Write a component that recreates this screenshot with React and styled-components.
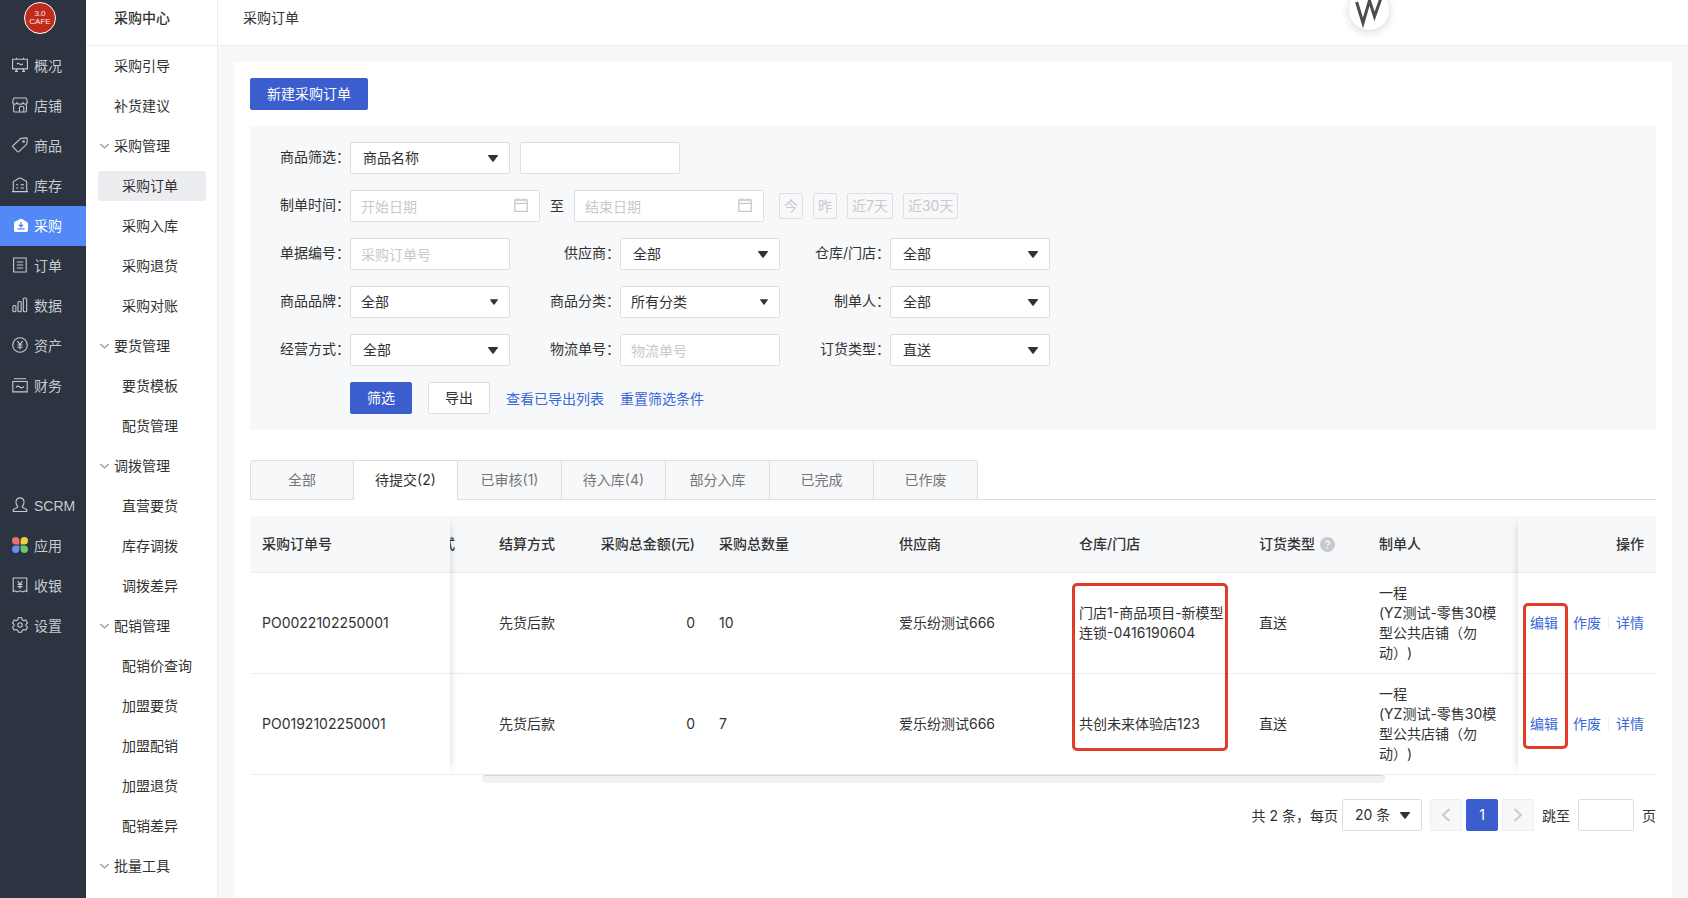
import React, { useState } from "react";
import styled, { createGlobalStyle } from "styled-components";

const GlobalStyle = createGlobalStyle`
  * {
    box-sizing: border-box;
  }
  body {
    margin: 0;
    background: #f7f8fa;
    color: #323233;
    font-family: Inter, "Noto Sans CJK SC", sans-serif;
    font-size: 14px;
    line-height: 20px;
    text-spacing-trim: space-all;
  }
  button, input, select {
    font: inherit;
    color: inherit;
    margin: 0;
  }
  a {
    text-decoration: none;
  }
`;

const Layout = styled.div`
  display: flex;
  min-height: 100vh;
`;

/* ---------- left rail ---------- */

const Rail = styled.nav`
  flex: none;
  width: 86px;
  padding-top: 2px;
  background: #2b3440;
  font-family: "Liberation Sans", "Noto Sans CJK SC", sans-serif;
`;

const ShopLogo = styled.div`
  display: flex;
  flex-direction: column;
  align-items: center;
  justify-content: center;
  width: 32px;
  height: 32px;
  margin: 0 auto 12px 24px;
  border: 1px solid #fff;
  border-radius: 50%;
  background: #c02b1d;
  color: #fbeae8;
  font-size: 8px;
  line-height: 8px;
`;

const RailList = styled.div`
  margin-bottom: 80px;
`;

const RailLink = styled.a`
  display: flex;
  align-items: center;
  gap: 6px;
  height: 40px;
  padding-left: 12px;
  background: ${(props) => (props.$active ? "#5389f6" : "transparent")};
  color: ${(props) => (props.$active ? "#fff" : "#c8cacd")};
  svg {
    flex: none;
    width: 16px;
    height: 16px;
    margin-bottom: 2px;
  }
`;

/* ---------- second menu ---------- */

const SubMenu = styled.nav`
  flex: none;
  width: 132px;
  border-right: 1px solid #ebedf0;
  background: #fff;
`;

const SubTitle = styled.h2`
  height: 46px;
  margin: 0;
  padding: 8px 0 0 28px;
  border-bottom: 1px solid #ebedf0;
  font-size: 14px;
  font-weight: 500;
  line-height: 20px;
`;

const SubLink = styled.a`
  display: flex;
  align-items: center;
  height: 30px;
  margin: 5px 11px 10px 12px;
  padding-left: ${(props) => (props.$child ? "24px" : "16px")};
  border-radius: 2px;
  background: ${(props) => (props.$active ? "#ebedf0" : "transparent")};
  color: #323233;
`;

const SubGroup = styled.button`
  display: flex;
  align-items: center;
  gap: 4px;
  height: 30px;
  margin: 5px 0 10px 12px;
  padding: 0 0 0 1px;
  border: 0;
  background: none;
  svg {
    width: 11px;
    height: 10px;
  }
`;

/* ---------- page ---------- */

const Main = styled.div`
  display: flex;
  flex: 1;
  flex-direction: column;
  min-width: 0;
`;

const Header = styled.header`
  position: relative;
  height: 46px;
  padding: 8px 0 0 25px;
  border-bottom: 1px solid #ebedf0;
  background: #fff;
`;

const Crumb = styled.h1`
  margin: 0;
  font-size: 14px;
  font-weight: 400;
  line-height: 20px;
`;

const FloatBadge = styled.div`
  position: absolute;
  top: -10px;
  right: 299px;
  width: 40px;
  height: 40px;
  border-radius: 50%;
  background: #fff;
  box-shadow: 0 2px 10px rgba(0, 0, 0, 0.16);
  svg {
    display: block;
  }
`;

const Panel = styled.main`
  flex: 1;
  margin: 16px 16px 0;
  padding: 16px;
  background: #fff;
`;

const Button = styled.button`
  height: 32px;
  padding: 0 16px;
  border: 1px solid ${(props) => (props.$primary ? "#3b5dcd" : "#dcdee0")};
  border-radius: 2px;
  background: ${(props) => (props.$primary ? "#3b5dcd" : "#fff")};
  color: ${(props) => (props.$primary ? "#fff" : "#323233")};
`;

const TextLink = styled.a`
  color: #3a68d8;
`;

/* ---------- filter ---------- */

const Filter = styled.form`
  display: flex;
  flex-direction: column;
  gap: 16px;
  margin: 16px 0 30px;
  padding: 16px 0;
  background: #f7f8fa;
`;

const FilterRow = styled.div`
  display: flex;
  align-items: center;
  gap: 10px;
`;

const Field = styled.div`
  display: flex;
  align-items: center;
`;

const Label = styled.label`
  width: 100px;
  padding-bottom: 2px;
  text-align: right;
`;

const Input = styled.input`
  width: ${(props) => props.$width || "160px"};
  height: 32px;
  padding: 0 10px;
  border: 1px solid #dcdee0;
  border-radius: 2px;
  background: #fff;
  &::placeholder {
    color: #c8c9cc;
    opacity: 1;
  }
`;

const Overlay = styled.div`
  display: grid;
  align-items: center;
  > * {
    grid-area: 1 / 1;
  }
  > svg {
    justify-self: end;
    margin-right: 12px;
    pointer-events: none;
  }
`;

const SelectBox = styled.select`
  width: ${(props) => props.$width || "160px"};
  height: 32px;
  padding: 0 ${(props) => (props.$compact ? "10px" : "12px")};
  border: 1px solid #dcdee0;
  border-radius: 2px;
  background: #fff;
  appearance: none;
`;

const QuickDates = styled.div`
  display: flex;
  gap: 10px;
  margin-left: 5px;
`;

const QuickDate = styled.button`
  height: 26px;
  padding: 0 4px;
  border: 1px solid #dcdee0;
  border-radius: 2px;
  background: none;
  color: #c8c9cc;
`;

const Actions = styled.div`
  display: flex;
  align-items: center;
  gap: 16px;
  padding-left: 100px;
  a {
    padding-top: 2px;
  }
`;

/* ---------- tabs ---------- */

const Tabs = styled.div`
  display: flex;
  height: 40px;
  margin-bottom: 16px;
  box-shadow: inset 0 -1px #dcdee0;
`;

const Tab = styled.button`
  width: 104px;
  padding: 0;
  border: 1px solid #dcdee0;
  border-left-width: 0;
  border-bottom-color: ${(props) => (props.$active ? "#fff" : "#dcdee0")};
  background: ${(props) => (props.$active ? "#fff" : "#f7f8fa")};
  color: ${(props) => (props.$active ? "#323233" : "#747577")};
  &:first-child {
    border-left-width: 1px;
    border-top-left-radius: 4px;
  }
  &:last-child {
    border-top-right-radius: 4px;
  }
`;

/* ---------- table ---------- */

const TableWrap = styled.div`
  position: relative;
`;

const Table = styled.table`
  width: 100%;
  table-layout: fixed;
  border-spacing: 0;
`;

const Th = styled.th`
  width: ${(props) => props.$width || "auto"};
  height: 57px;
  padding: 0 12px;
  border-bottom: 1px solid #ebedf0;
  background: #f7f8fa;
  font-weight: 500;
  text-align: ${(props) => props.$align || "left"};
  white-space: nowrap;
`;

const Td = styled.td`
  height: 101px;
  padding: 0 12px;
  border-bottom: 1px solid #ebedf0;
  text-align: ${(props) => props.$align || "left"};
`;

const CreatorTd = styled(Td)`
  padding-right: 16px;
`;

const CutTh = styled(Th)`
  padding: 0 32px 0 0;
  div {
    display: flex;
    justify-content: flex-end;
    overflow: hidden;
  }
`;

const HelpTitle = styled.span`
  display: flex;
  align-items: center;
  gap: 5px;
`;

const RowActions = styled.div`
  display: flex;
  align-items: center;
  justify-content: flex-end;
  gap: 7px;
`;

const Divider = styled.span`
  width: 1px;
  height: 12px;
  background: #ebedf0;
`;

const EdgeShadow = styled.div`
  position: absolute;
  top: 0;
  bottom: 2px;
  width: 8px;
  pointer-events: none;
  mask-image: linear-gradient(transparent, #000 16px, #000 calc(100% - 12px), transparent);
  ${(props) =>
    props.$side === "left"
      ? "left: 200px; background: linear-gradient(90deg, rgba(0,0,0,0.09), rgba(0,0,0,0.03) 40%, transparent);"
      : "right: 138px; background: linear-gradient(270deg, rgba(0,0,0,0.09), rgba(0,0,0,0.03) 40%, transparent);"}
`;

const Mark = styled.div`
  position: absolute;
  top: ${(props) => props.$top};
  right: ${(props) => props.$right};
  width: ${(props) => props.$width};
  height: ${(props) => props.$height};
  border: 3px solid #e03c27;
  border-radius: 5px;
  pointer-events: none;
`;

const ScrollTrack = styled.div`
  height: 8px;
  padding: 0 19.3% 0 16.5%;
`;

const ScrollThumb = styled.div`
  height: 8px;
  border-top: 1px solid #d5d5d6;
  border-radius: 4px;
  background: #f1f1f1;
`;

const Pager = styled.div`
  display: flex;
  align-items: center;
  justify-content: flex-end;
  gap: 8px;
  margin-top: 16px;
`;

const PagerText = styled.label`
  padding-top: 2px;
`;

const PagerSize = styled.div`
  display: flex;
  align-items: center;
  gap: 4px;
`;

const Pages = styled.div`
  display: flex;
  gap: 4px;
`;

const PageButton = styled.button`
  display: flex;
  align-items: center;
  justify-content: center;
  width: 32px;
  height: 32px;
  padding: 0;
  border: 1px solid ${(props) => (props.$current ? "#3b5dcd" : "#ebedf0")};
  border-radius: 2px;
  background: ${(props) => (props.$current ? "#3b5dcd" : "#f7f8fa")};
  color: ${(props) => (props.$current ? "#fff" : "#c8c9cc")};
`;

/* ---------- icons ---------- */

const Svg = ({ children }) => (
  <svg viewBox="0 0 16 16" fill="none" stroke="currentColor" strokeWidth="1.1" aria-hidden="true">
    {children}
  </svg>
);

const icons = {
  overview: (
    <Svg>
      <path d="M.6 2.200h14.800v9.700H.6zM4.500 2V.700M11.500 2V.700M5.200 12.200l-2 2.600M10.800 12.200l2 2.600M3 14.500h3M10 14.500h3" />
      <path d="M4.800 7.200q1.400-2 3 0 1.500 1.400 3-.6" />
    </Svg>
  ),
  shop: (
    <Svg>
      <path d="M2.600 1h10.800q1 0 1.200 1l.7 3.300c0 2.400-3.600 2.400-4.200.5-.8 2-5.400 2-6.200 0-.6 1.900-4.200 1.900-4.200-.5L1.400 2q.2-1 1.200-1zM1.600 7.500v6.300q0 1.200 1.200 1.200h10.400q1.200 0 1.200-1.200V7.500" />
      <path d="M7.400 14.800v-3.600q0-2 2.200-2t2.200 2v3.600" />
    </Svg>
  ),
  goods: (
    <Svg>
      <path d="M8.900 1.300L14.300.9q1 0 1 1l-.5 5.200-7.800 7.600q-.7.6-1.400 0L.9 10q-.6-.8 0-1.400z" />
      <circle cx="11.600" cy="4.500" r=".8" />
    </Svg>
  ),
  stock: (
    <Svg>
      <path d="M1.300 4.600L7 1.200q1-.5 2 0l5.700 3.400v9.100q0 .9-.9.900H2.200q-.9 0-.9-.9zM0 14.600h16" />
      <path d="M4.200 7.800h2M4.200 11h2M8.600 7.800h3.400M8.600 11h3.400" />
    </Svg>
  ),
  purchase: (
    <svg viewBox="0 0 16 16" aria-hidden="true">
      <path fill="currentColor" d="M2.200 4.900L8 1.900q1-.4 2 0l5 3q1 .5 1 1.500v7.200q0 1.400-1.400 1.400H3.400Q2 15 2 13.600V6.200z" />
      <path fill="none" stroke="#5389f6" strokeWidth="1.300" d="M9 5v4.500M6.800 7.700L9 9.800l2.200-2.100M5.400 11.900h7.200" />
    </svg>
  ),
  order: (
    <Svg>
      <path d="M1.600 1h12.600v14H1.600zM4.800 5h6.400M4.800 8h6.400M4.800 11h6.400" />
    </Svg>
  ),
  data: (
    <Svg>
      <rect x=".9" y="8.500" width="3" height="6.300" rx="1" />
      <rect x="6" y="4.500" width="3.200" height="10.300" rx="1" />
      <rect x="11.300" y="1" width="3.400" height="13.800" rx="1" />
    </Svg>
  ),
  asset: (
    <Svg>
      <circle cx="8" cy="8" r="7.300" />
      <path d="M5.400 4.200L8 7.600l2.600-3.400M8 7.600v5M5.400 8h5.200M5.400 10.300h5.200" />
    </Svg>
  ),
  finance: (
    <Svg>
      <path d="M.8 4.500h14.400v10.400H.8zM1.800 1.800h12.400" />
      <path d="M4 10.300q2-2.400 4 0 2 1.400 4-1" />
    </Svg>
  ),
  scrm: (
    <Svg>
      <path d="M5.700 9.300Q3.700 7.400 4 4.500 4.500.9 8 .9t4 3.600q.3 2.900-1.700 4.800l.2 1.200 4.200 2v2H1.300v-2l4.200-2z" />
    </Svg>
  ),
  apps: (
    <svg viewBox="0 0 16 16" aria-hidden="true">
      <path fill="#e8706b" d="M3.700 0a3.700 3.700 0 0 1 3.700 3.700v3.700H3.700a3.700 3.700 0 0 1 0-7.400z" />
      <path fill="#f0cb43" d="M12.300 0a3.700 3.700 0 0 1 0 7.400H8.600V3.700A3.700 3.700 0 0 1 12.300 0z" />
      <path fill="#678cf3" d="M3.700 8.600h3.700v3.700a3.700 3.700 0 1 1-3.700-3.700z" />
      <path fill="#65cb62" d="M8.600 8.600h3.700a3.700 3.700 0 1 1-3.700 3.700z" />
    </svg>
  ),
  cashier: (
    <Svg>
      <path d="M1.200 1h13.600v13.600l-2-.8-2 1.200-2.800-1.200L5.200 15l-2-1.200-2 .8z" />
      <path d="M5.700 4l2.300 3 2.300-3M8 7v4.800M5.500 7.400h5M5.500 9.600h5" />
    </Svg>
  ),
  settings: (
    <Svg>
      <path d="M6.300.8h3.400l.5 2 1.600.9 2-.7 1.700 2.900L14 7.300v1.500l1.500 1.400-1.700 2.900-2-.6-1.600.9-.5 1.900H6.300l-.5-1.900-1.600-.9-2 .6-1.700-2.900L2 8.800V7.300L.5 5.900 2.200 3l2 .7 1.600-.9z" />
      <circle cx="8" cy="8" r="2.200" />
    </Svg>
  ),
};

const ChevronDown = () => (
  <svg viewBox="0 0 11 10" fill="none" stroke="#969799" strokeWidth="1.2" aria-hidden="true">
    <path d="M1.300 3l4.200 4 4.200-4" />
  </svg>
);

const Caret = ({ small }) => (
  <svg width={small ? 8 : 10} height={small ? 6 : 7} viewBox="0 0 10 7" aria-hidden="true">
    <path fill="#323233" d="M.5 0h9q.8.3.3 1L5.600 6.600q-.6.600-1.200 0L.2 1Q-.3.300.5 0z" />
  </svg>
);

const Calendar = () => (
  <svg width="14" height="16" viewBox="0 0 14 16" fill="none" stroke="#c8c9cc" strokeWidth="1.300" aria-hidden="true">
    <path d="M.7 2h12.600v11.400H.7zM.7 5.300h12.600M3.700 0v3M10.300 0v3" />
  </svg>
);

const Help = () => (
  <svg width="15" height="15" viewBox="0 0 15 15" aria-hidden="true">
    <circle cx="7.500" cy="7.500" r="7.500" fill="#c8c9cc" />
    <path fill="none" stroke="#fff" strokeWidth="1.200" d="M5.600 6Q5.600 4.200 7.500 4.200T9.400 6q0 1-1.100 1.500-.8.400-.8 1.500M7.500 10v1.200" />
  </svg>
);

/* ---------- data ---------- */

const railTop = [
  ["overview", "概况"],
  ["shop", "店铺"],
  ["goods", "商品"],
  ["stock", "库存"],
  ["purchase", "采购"],
  ["order", "订单"],
  ["data", "数据"],
  ["asset", "资产"],
  ["finance", "财务"],
];

const railBottom = [
  ["scrm", "SCRM"],
  ["apps", "应用"],
  ["cashier", "收银"],
  ["settings", "设置"],
];

const menu = [
  { title: "采购管理", items: ["采购订单", "采购入库", "采购退货", "采购对账"] },
  { title: "要货管理", items: ["要货模板", "配货管理"] },
  { title: "调拨管理", items: ["直营要货", "库存调拨", "调拨差异"] },
  { title: "配销管理", items: ["配销价查询", "加盟要货", "加盟配销", "加盟退货", "配销差异"] },
  { title: "批量工具", items: [] },
];

const tabs = ["全部", "待提交(2)", "已审核(1)", "待入库(4)", "部分入库", "已完成", "已作废"];

const orders = [
  { no: "PO0022102250001", count: 10, store: "门店1-商品项目-新模型连锁-0416190604" },
  { no: "PO0192102250001", count: 7, store: "共创未来体验店123" },
];

const filters = [
  [
    { id: "no", label: "单据编号", placeholder: "采购订单号" },
    { id: "supplier", label: "供应商", value: "全部" },
    { id: "store", label: "仓库/门店", value: "全部" },
  ],
  [
    { id: "brand", label: "商品品牌", value: "全部", compact: true },
    { id: "category", label: "商品分类", value: "所有分类", compact: true },
    { id: "creator", label: "制单人", value: "全部" },
  ],
  [
    { id: "mode", label: "经营方式", value: "全部" },
    { id: "logistics", label: "物流单号", placeholder: "物流单号" },
    { id: "type", label: "订货类型", value: "直送" },
  ],
];

const Select = ({ id, value, width, label, compact }) => (
  <Overlay>
    <SelectBox id={id} $width={width} $compact={compact} aria-label={label}>
      <option>{value}</option>
    </SelectBox>
    <Caret small={compact} />
  </Overlay>
);

const DateInput = ({ id, placeholder }) => (
  <Overlay>
    <Input id={id} $width="190px" placeholder={placeholder} aria-label={placeholder} />
    <Calendar />
  </Overlay>
);

const App = () => {
  const [tab, setTab] = useState(1);

  const renderRail = (list) =>
    list.map(([icon, name]) => (
      <RailLink key={icon} href="#" $active={icon === "purchase"}>
        {icons[icon]}
        {name}
      </RailLink>
    ));

  return (
    <Layout>
      <GlobalStyle />
      <Rail>
        <ShopLogo>
          <span>3.0</span>
          <span>CAFE</span>
        </ShopLogo>
        <RailList>{renderRail(railTop)}</RailList>
        {renderRail(railBottom)}
      </Rail>

      <SubMenu>
        <SubTitle>采购中心</SubTitle>
        <SubLink href="#">采购引导</SubLink>
        <SubLink href="#">补货建议</SubLink>
        {menu.map((group) => (
          <React.Fragment key={group.title}>
            <SubGroup type="button">
              <ChevronDown />
              {group.title}
            </SubGroup>
            {group.items.map((item) => (
              <SubLink key={item} href="#" $child $active={item === "采购订单"}>
                {item}
              </SubLink>
            ))}
          </React.Fragment>
        ))}
      </SubMenu>

      <Main>
        <Header>
          <Crumb>采购订单</Crumb>
          <FloatBadge>
            <svg width="40" height="40" viewBox="0 0 40 40" fill="none" stroke="#4c4c4c" strokeWidth="3" aria-hidden="true">
              <path d="M7.600 12L14 33l6.500-22.500L25.500 26.500 32 8" />
            </svg>
          </FloatBadge>
        </Header>

        <Panel>
          <Button type="button" $primary>
            新建采购订单
          </Button>

          <Filter onSubmit={(e) => e.preventDefault()}>
            <FilterRow>
              <Field>
                <Label htmlFor="goods">商品筛选：</Label>
                <Select id="goods" value="商品名称" />
              </Field>
              <Input aria-label="商品名称" />
            </FilterRow>
            <FilterRow>
              <Field>
                <Label htmlFor="start">制单时间：</Label>
                <DateInput id="start" placeholder="开始日期" />
              </Field>
              <span>至</span>
              <DateInput id="end" placeholder="结束日期" />
              <QuickDates>
                {["今", "昨", "近7天", "近30天"].map((day) => (
                  <QuickDate key={day} type="button">
                    {day}
                  </QuickDate>
                ))}
              </QuickDates>
            </FilterRow>
            {filters.map((row) => (
              <FilterRow key={row[0].id}>
                {row.map((field) => (
                  <Field key={field.id}>
                    <Label htmlFor={field.id}>{field.label}：</Label>
                    {field.placeholder ? (
                      <Input id={field.id} placeholder={field.placeholder} />
                    ) : (
                      <Select id={field.id} value={field.value} compact={field.compact} />
                    )}
                  </Field>
                ))}
              </FilterRow>
            ))}
            <Actions>
              <Button type="submit" $primary>
                筛选
              </Button>
              <Button type="button">导出</Button>
              <TextLink href="#">查看已导出列表</TextLink>
              <TextLink href="#">重置筛选条件</TextLink>
            </Actions>
          </Filter>

          <Tabs role="tablist">
            {tabs.map((name, idx) => (
              <Tab
                key={name}
                type="button"
                role="tab"
                aria-selected={idx === tab}
                $active={idx === tab}
                onClick={() => setTab(idx)}
              >
                {name}
              </Tab>
            ))}
          </Tabs>

          <TableWrap>
            <Table>
              <thead>
                <tr>
                  <Th $width="200px">采购订单号</Th>
                  <CutTh $width="37px">
                    <div>式</div>
                  </CutTh>
                  <Th $width="100px">结算方式</Th>
                  <Th $width="120px" $align="right">
                    采购总金额(元)
                  </Th>
                  <Th $width="180px">采购总数量</Th>
                  <Th $width="180px">供应商</Th>
                  <Th $width="180px">仓库/门店</Th>
                  <Th $width="120px">
                    <HelpTitle>
                      订货类型
                      <Help />
                    </HelpTitle>
                  </Th>
                  <Th>制单人</Th>
                  <Th $width="138px" $align="right">
                    操作
                  </Th>
                </tr>
              </thead>
              <tbody>
                {orders.map((order) => (
                  <tr key={order.no}>
                    <Td>{order.no}</Td>
                    <Td />
                    <Td>先货后款</Td>
                    <Td $align="right">0</Td>
                    <Td>{order.count}</Td>
                    <Td>爱乐纷测试666</Td>
                    <Td>{order.store}</Td>
                    <Td>直送</Td>
                    <CreatorTd>
                      一程
                      <br />
                      (YZ测试-零售30模型公共店铺（勿动）)
                    </CreatorTd>
                    <Td>
                      <RowActions>
                        <TextLink href="#">编辑</TextLink>
                        <Divider />
                        <TextLink href="#">作废</TextLink>
                        <Divider />
                        <TextLink href="#">详情</TextLink>
                      </RowActions>
                    </Td>
                  </tr>
                ))}
              </tbody>
            </Table>
            <EdgeShadow $side="left" />
            <EdgeShadow $side="right" />
            <Mark $top="67px" $right="428px" $width="156px" $height="168px" />
            <Mark $top="87px" $right="88px" $width="45px" $height="146px" />
          </TableWrap>
          <ScrollTrack>
            <ScrollThumb />
          </ScrollTrack>

          <Pager>
            <PagerSize>
              <PagerText htmlFor="size">共 2 条，每页</PagerText>
              <Select id="size" value="20 条" width="80px" />
            </PagerSize>
            <Pages>
              <PageButton type="button" aria-label="上一页">
                <svg width="10" height="14" viewBox="0 0 10 14" fill="none" stroke="currentColor" strokeWidth="1.800">
                  <path d="M8.500 1L2 7l6.500 6" />
                </svg>
              </PageButton>
              <PageButton type="button" $current>
                1
              </PageButton>
              <PageButton type="button" aria-label="下一页">
                <svg width="10" height="14" viewBox="0 0 10 14" fill="none" stroke="currentColor" strokeWidth="1.800">
                  <path d="M1.500 1L8 7l-6.500 6" />
                </svg>
              </PageButton>
            </Pages>
            <PagerText htmlFor="jump">跳至</PagerText>
            <Input id="jump" $width="56px" />
            <PagerText htmlFor="jump">页</PagerText>
          </Pager>
        </Panel>
      </Main>
    </Layout>
  );
};

export default App;
